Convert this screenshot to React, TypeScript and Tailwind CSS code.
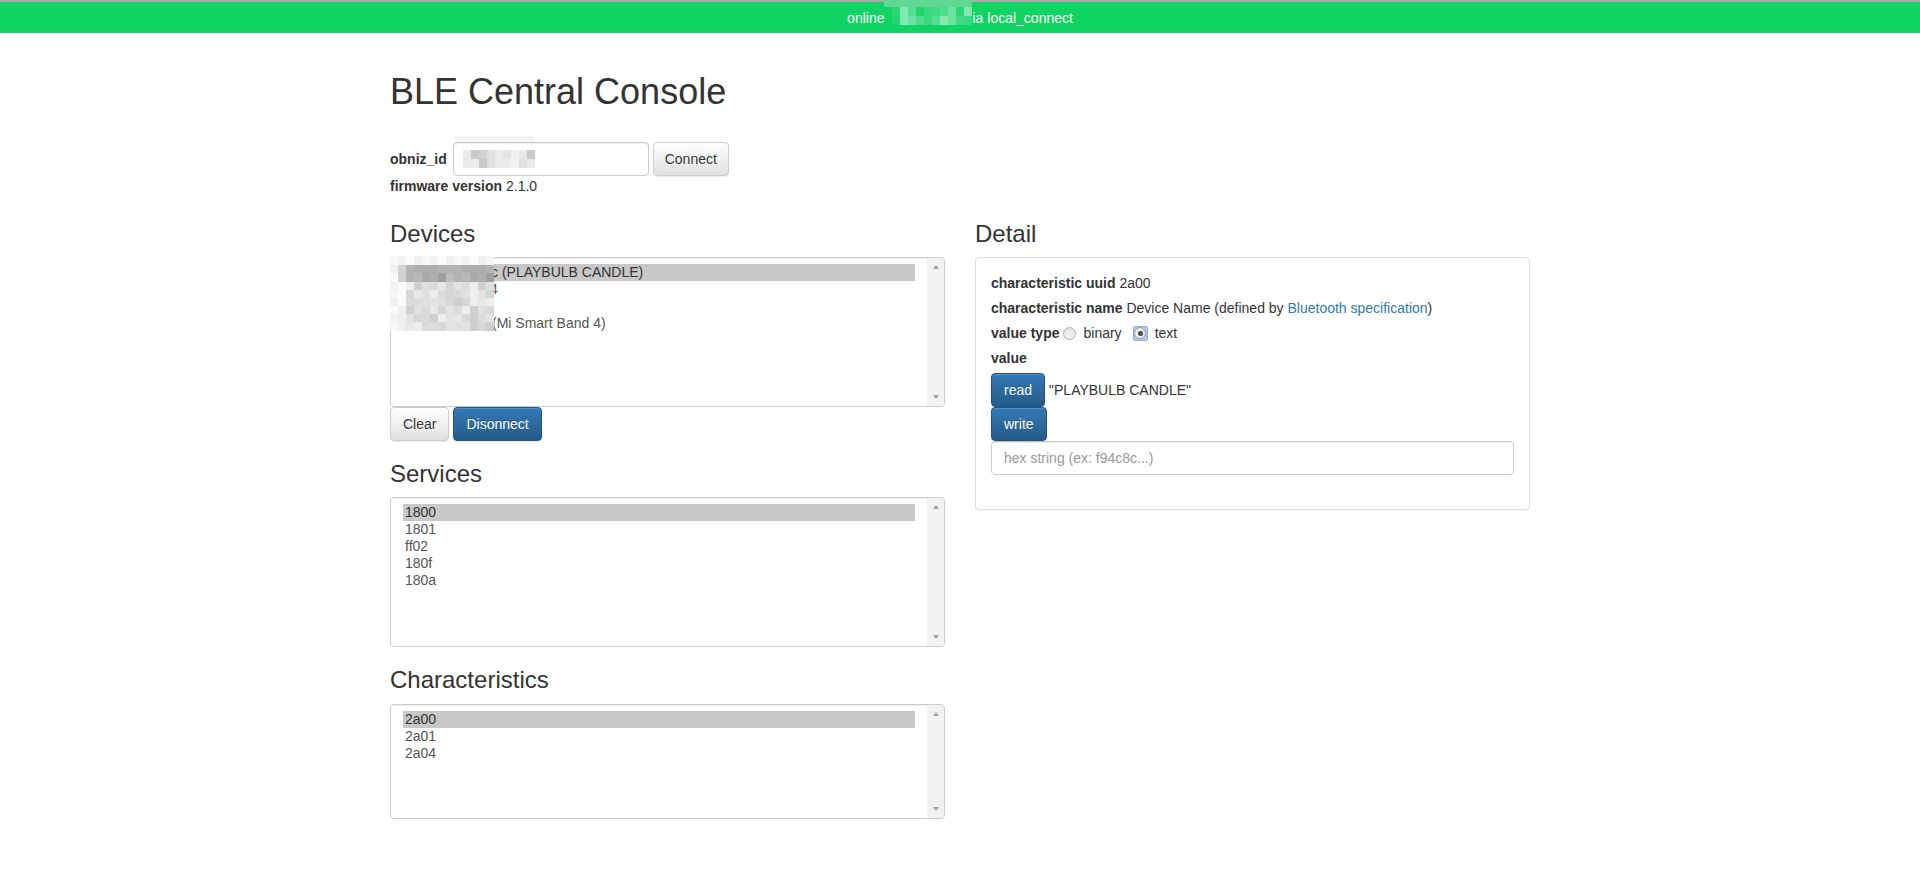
import React from "react";

const FONT = "font-['Liberation_Sans',Arial,Helvetica,sans-serif]";

const barPal = [
  "bg-[#2ad676]",
  "bg-[#3fdb84]",
  "bg-[#55df93]",
  "bg-[#6ae3a2]",
  "bg-[#38d97f]",
  "bg-[#84e8b2]",
  "bg-[#4cdd8d]",
  "bg-[#22d36e]",
];
const inPal = [
  "bg-[#e9e9ea]",
  "bg-[#dedfe1]",
  "bg-[#f1f1f1]",
  "bg-[#d3d3d5]",
  "bg-[#e4e4e6]",
  "bg-[#cacaca]",
  "bg-[#ececec]",
];
const whitePal = ["bg-[#f7f7f7]", "bg-[#f2f2f2]", "bg-[#fbfbfb]", "bg-[#efefef]"];
const darkPal = ["bg-[#a9a9a9]", "bg-[#b3b3b3]", "bg-[#9f9f9f]", "bg-[#bdbdbd]", "bg-[#aeaeae]", "bg-[#b8b8b8]"];
const lightPal = [
  "bg-[#d6d6d6]",
  "bg-[#e0e0e0]",
  "bg-[#dcdcdc]",
  "bg-[#e8e8e8]",
  "bg-[#cfcfcf]",
  "bg-[#e4e2e2]",
  "bg-[#d9dadc]",
  "bg-[#eeeeee]",
];

function pick(arr: string[], r: number, c: number) {
  return arr[(r * 7 + c * 5 + ((r * c) % 3)) % arr.length];
}

function BarMosaic() {
  return (
    <span className="relative inline-block w-[88px] h-[18px] mb-[3px]">
      <span className="absolute left-0 top-[-7px] w-[88px] h-[7px] bg-[#62d794]" />
      <span className="absolute left-[8px] top-0 flex flex-col">
        {[0, 1].map((r) => (
          <span key={r} className="flex h-[9px]">
            {Array.from({ length: 10 }).map((_, c) => (
              <span key={c} className={`w-[8px] h-[9px] ${pick(barPal, r, c)}`} />
            ))}
          </span>
        ))}
      </span>
    </span>
  );
}

function TopBar() {
  return (
    <div className="h-[33px] border-t-2 border-[#acacac] bg-[#0fd463] flex items-center justify-center text-white text-[14px] leading-[20px]">
      <span>online</span>
      <BarMosaic />
      <span>ia local_connect</span>
    </div>
  );
}

const rowHeights = ["h-[9px]", "h-[8px]", "h-[9px]", "h-[8px]", "h-[8px]", "h-[8px]", "h-[8px]", "h-[8px]", "h-[9px]"];

function DeviceMosaic() {
  return (
    <div className="absolute left-[-1px] top-[-2px] flex flex-col">
      {rowHeights.map((h, r) => (
        <div key={r} className={`flex ${h}`}>
          {Array.from({ length: 13 }).map((_, c) => {
            let cls: string;
            if (r === 0 || c === 0) cls = pick(whitePal, r, c);
            else if (r <= 2) cls = c === 1 ? "bg-[#d2d2d2]" : pick(darkPal, r, c);
            else cls = c === 1 ? pick(whitePal, r, c) : pick(lightPal, r, c);
            return <div key={c} className={`w-[8px] h-full ${cls}`} />;
          })}
        </div>
      ))}
    </div>
  );
}

type Item = { hiddenW?: string; text: string };

function ListBox({
  items,
  hClass,
  mosaic,
}: {
  items: Item[];
  hClass: string;
  mosaic?: boolean;
}) {
  return (
    <div
      className={`relative flex ${hClass} border border-[#ccc] rounded-[4px] bg-white shadow-[inset_0_1px_1px_rgba(0,0,0,0.075)]`}
    >
      <div className="flex-1 min-w-0 py-[6px] px-[12px] text-[14px] text-[#555] overflow-hidden">
        {items.map((it, i) => (
          <div
            key={i}
            className={`h-[17px] leading-[16px] pb-[1px] px-[2px] whitespace-nowrap ${
              i === 0 ? "bg-[#c8c8c8] text-[#333]" : ""
            }`}
          >
            {it.hiddenW ? <span className={`inline-block h-[16px] align-top ${it.hiddenW}`} /> : null}
            {it.text}
          </div>
        ))}
      </div>
      <div className="w-[17px] bg-[#f1f1f1] rounded-r-[3px] flex flex-col items-center justify-between pt-[7px] pb-[7px]">
        <span className="w-0 h-0 border-l-[3.5px] border-r-[3.5px] border-l-transparent border-r-transparent border-b-[4px] border-b-[#a3a3a3]" />
        <span className="w-0 h-0 border-l-[3.5px] border-r-[3.5px] border-l-transparent border-r-transparent border-t-[4px] border-t-[#a3a3a3]" />
      </div>
      {mosaic ? <DeviceMosaic /> : null}
    </div>
  );
}

const btnBase =
  "inline-flex items-center justify-center h-[34px] px-[12px] border rounded-[4px] text-[14px] leading-[20px] whitespace-nowrap";
const btnDefault =
  "bg-[linear-gradient(to_bottom,#ffffff_0,#e0e0e0_100%)] border-[#ccc] text-[#333] [text-shadow:0_1px_0_#fff] shadow-[inset_0_1px_0_rgba(255,255,255,0.15),0_1px_1px_rgba(0,0,0,0.075)]";
const btnPrimary =
  "bg-[linear-gradient(to_bottom,#337ab7_0,#265a88_100%)] border-[#245580] text-white [text-shadow:0_-1px_0_rgba(0,0,0,0.2)] shadow-[inset_0_1px_0_rgba(255,255,255,0.15),0_1px_1px_rgba(0,0,0,0.075)]";

function H3({ children, className = "" }: { children: React.ReactNode; className?: string }) {
  return <h3 className={`text-[24px] leading-[26.4px] font-normal text-[#333] mb-[10px] ${className}`}>{children}</h3>;
}

function IdInput() {
  return (
    <div className="relative ml-[6px]">
      <input
        readOnly
        className="block w-[196px] h-[34px] px-[12px] border border-[#ccc] rounded-[4px] bg-white text-[#555] shadow-[inset_0_1px_1px_rgba(0,0,0,0.075)] outline-none"
      />
      <span className="absolute left-[2px] top-[-6px] w-[79px] h-[6px] bg-[#f4f4f4]" />
      <span className="absolute left-[10px] top-[8px] flex flex-col">
        {[0, 1].map((r) => (
          <span key={r} className="flex h-[9px]">
            {Array.from({ length: 9 }).map((_, c) => (
              <span key={c} className={`w-[8px] h-[9px] ${pick(inPal, r, c)}`} />
            ))}
          </span>
        ))}
      </span>
    </div>
  );
}

function Radio({ checked }: { checked?: boolean }) {
  if (checked) {
    return (
      <span className="inline-flex items-center justify-center w-[15px] h-[15px] rounded-[2px] bg-[#b4cdef] border border-[#8db0e2]">
        <span className="inline-flex items-center justify-center w-[12px] h-[12px] rounded-full border border-[#9a9a9a] bg-[linear-gradient(to_bottom,#e6e6e6,#f7f7f7)]">
          <span className="w-[5px] h-[5px] rounded-full bg-[#4a4a4a]" />
        </span>
      </span>
    );
  }
  return (
    <span className="inline-block w-[13px] h-[13px] rounded-full border border-[#b0b0b0] bg-[linear-gradient(to_bottom,#e2e2e2,#f4f4f4)]" />
  );
}

const plain = (s: string): Item => ({ text: s });

export default function App() {
  return (
    <div className={`${FONT} text-[14px] leading-[20px] text-[#333] bg-white min-h-screen`}>
      <TopBar />
      <div className="w-[1170px] mx-auto px-[15px]">
        <h1 className="mt-[39px] text-[36px] leading-[39.6px] font-normal text-[#333]">BLE Central Console</h1>
        <div className="mt-[30px] flex items-center h-[34px]">
          <span className="font-bold">obniz_id</span>
          <IdInput />
          <button className={`${btnBase} ${btnDefault} ml-[4px] w-[76px]`}>Connect</button>
        </div>
        <div>
          <span className="font-bold">firmware version</span> 2.1.0
        </div>
        <div className="mt-[25px] flex -mx-[15px]">
          <div className="w-1/2 px-[15px]">
            <H3>Devices</H3>
            <ListBox
              hClass="h-[150px]"
              mosaic
              items={[
                { hiddenW: "w-[86px]", text: "c (PLAYBULB CANDLE)" },
                { hiddenW: "w-[85px]", text: "4" },
                { hiddenW: "w-[80px]", text: "" },
                { hiddenW: "w-[87px]", text: "(Mi Smart Band 4)" },
              ]}
            />
            <div className="flex">
              <button className={`${btnBase} ${btnDefault}`}>Clear</button>
              <button className={`${btnBase} ${btnPrimary} ml-[4px]`}>Disonnect</button>
            </div>
            <H3 className="mt-[20px]">Services</H3>
            <ListBox hClass="h-[150px]" items={["1800", "1801", "ff02", "180f", "180a"].map(plain)} />
            <H3 className="mt-[20px]">Characteristics</H3>
            <ListBox hClass="h-[115px]" items={["2a00", "2a01", "2a04"].map(plain)} />
          </div>
          <div className="w-1/2 px-[15px]">
            <H3>Detail</H3>
            <div className="border border-[#ddd] rounded-[4px] bg-white shadow-[0_1px_1px_rgba(0,0,0,0.05)] px-[15px] pt-[15px] pb-[15px]">
              <div className="mb-[5px]">
                <span className="font-bold">characteristic uuid</span> 2a00
              </div>
              <div className="mb-[5px]">
                <span className="font-bold">characteristic name</span> Device Name (defined by{" "}
                <span className="text-[#337ab7]">Bluetooth specification</span>)
              </div>
              <div className="mb-[5px] flex items-center h-[20px]">
                <span className="font-bold">value type</span>
                <span className="ml-[4px] inline-flex">
                  <Radio />
                </span>
                <span className="ml-[7px]">binary</span>
                <span className="ml-[11px] inline-flex">
                  <Radio checked />
                </span>
                <span className="ml-[7px]">text</span>
              </div>
              <div className="mb-[5px] font-bold">value</div>
              <div className="flex items-center">
                <button className={`${btnBase} ${btnPrimary}`}>read</button>
                <span className="ml-[4px]">"PLAYBULB CANDLE"</span>
              </div>
              <div className="flex">
                <button className={`${btnBase} ${btnPrimary}`}>write</button>
              </div>
              <input
                placeholder="hex string (ex: f94c8c...)"
                className="block w-full h-[34px] px-[12px] border border-[#ccc] rounded-[4px] bg-white text-[#555] placeholder:text-[#999] shadow-[inset_0_1px_1px_rgba(0,0,0,0.075)] outline-none mb-[19px]"
              />
            </div>
          </div>
        </div>
      </div>
    </div>
  );
}
